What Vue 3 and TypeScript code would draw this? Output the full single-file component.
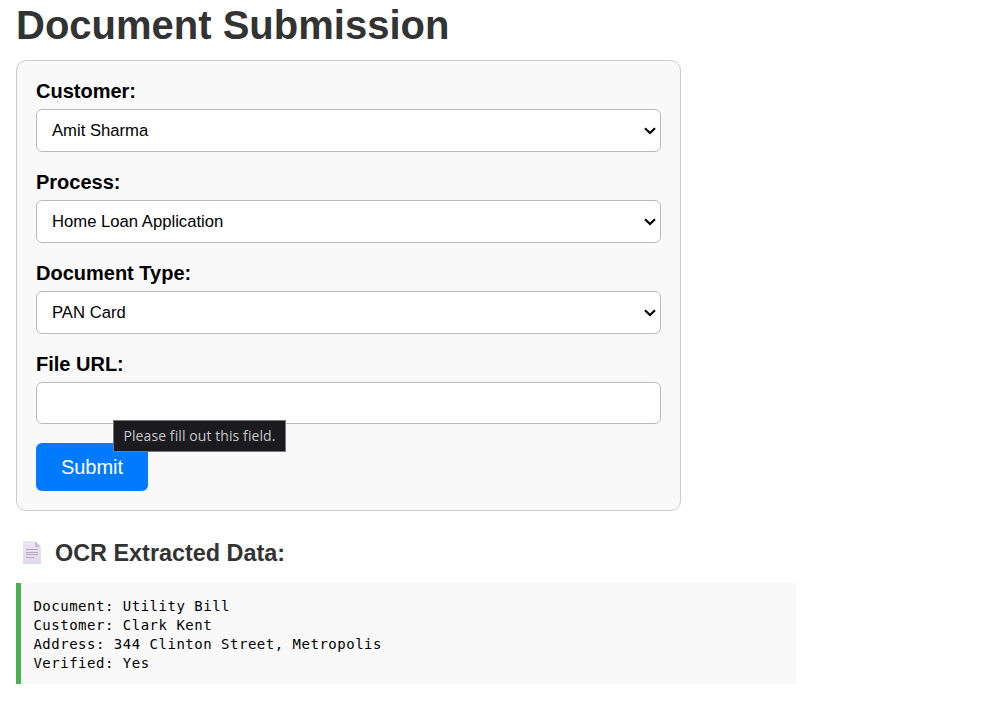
<script setup lang="ts">
import { ref } from 'vue'

interface SelectField {
  id: string
  label: string
  value: string
}

const fields = ref<SelectField[]>([
  { id: 'customer', label: 'Customer:', value: 'Amit Sharma' },
  { id: 'process', label: 'Process:', value: 'Home Loan Application' },
  { id: 'document-type', label: 'Document Type:', value: 'PAN Card' },
])
const fileUrl = ref('')

const extracted = [
  'Document: Utility Bill',
  'Customer: Clark Kent',
  'Address: 344 Clinton Street, Metropolis',
  'Verified: Yes',
].join('\n')
</script>

<template>
  <main class="page">
    <h1 class="title">Document Submission</h1>

    <form class="form" @submit.prevent>
      <div v-for="field in fields" :key="field.id" class="field">
        <label class="label" :for="field.id">{{ field.label }}</label>
        <div class="select-wrap">
          <select :id="field.id" v-model="field.value" class="control">
            <option :value="field.value">{{ field.value }}</option>
          </select>
          <svg class="chevron" width="12" height="8" viewBox="0 0 12 8" aria-hidden="true">
            <path d="M1 1.3 6 6.1l5-4.8" fill="none" stroke="#000" stroke-width="2.1" />
          </svg>
        </div>
      </div>

      <div class="field url-field">
        <label class="label" for="file-url">File URL:</label>
        <input id="file-url" v-model="fileUrl" class="control" type="text" required />
        <span class="tooltip">Please fill out this field.</span>
      </div>

      <button class="submit" type="submit">Submit</button>
    </form>

    <h3 class="subtitle">
      <svg class="page-icon" width="18" height="23" viewBox="0 0 18 23" aria-hidden="true">
        <defs>
          <linearGradient id="sheet" x1="0" y1="0" x2="0" y2="1">
            <stop offset="0" stop-color="#ece5f3" />
            <stop offset="1" stop-color="#e0d7ed" />
          </linearGradient>
        </defs>
        <path d="M0 0h12l6 6v17H0z" fill="url(#sheet)" />
        <path d="M12 0l6 6h-6z" fill="#c9c0d2" />
        <path d="M3 8.5h12M3 11.5h12M3 13.5h12M3 16.5h8" stroke="#b5adbc" stroke-width="1" />
      </svg>
      <span>OCR Extracted Data:</span>
    </h3>
    <pre class="result">{{ extracted }}</pre>
  </main>
</template>

<style>
body {
  margin: 0;
  background: #fff;
}
</style>

<style scoped>
.page {
  box-sizing: border-box;
  height: 702px;
  padding: 2px 16px 0;
  overflow: hidden;
  font-family: 'Liberation Sans', Arial, sans-serif;
  font-size: 20px;
}

.title {
  margin: 0 0 12px;
  color: #333;
  font-size: 40px;
  line-height: 46px;
}

.form {
  box-sizing: border-box;
  width: 665px;
  height: 451px;
  padding: 19px 19px 19px;
  border: 1px solid #ccc;
  border-radius: 10px;
  background: #f9f9f9;
}

.field {
  height: 91px;
}

.label {
  display: block;
  height: 23px;
  margin-bottom: 6px;
  font-weight: bold;
  line-height: 23px;
}

.select-wrap {
  position: relative;
}

.control {
  display: block;
  box-sizing: border-box;
  width: 100%;
  height: 43px;
  margin: 0;
  padding: 0 15px;
  border: 1px solid #bbb;
  border-radius: 6px;
  outline: none;
  background: #fff;
  color: #000;
  font-family: inherit;
  font-size: 16.667px;
  appearance: none;
}

.chevron {
  position: absolute;
  top: 18px;
  right: 5px;
  pointer-events: none;
}

.url-field {
  position: relative;
  height: 90px;
}

.url-field .control {
  height: 42px;
}

.tooltip {
  position: absolute;
  top: 67px;
  left: 77px;
  box-sizing: border-box;
  width: 173px;
  height: 32px;
  border: 1px solid #77777b;
  background: #1a1a1f;
  color: #c8c8cb;
  font-family: 'Open Sans', 'Noto Sans', sans-serif;
  font-size: 14px;
  line-height: 30px;
  letter-spacing: 0.09px;
  text-align: center;
  white-space: nowrap;
}

.submit {
  display: block;
  width: 112px;
  height: 48px;
  padding: 0;
  border: 0;
  border-radius: 6px;
  background: #007bff;
  color: #fff;
  font-family: inherit;
  font-size: 20px;
}

.subtitle {
  display: flex;
  align-items: center;
  gap: 14px;
  height: 28px;
  margin: 28px 0 16px;
  padding-left: 7px;
  color: #333;
  font-size: 23.4px;
  line-height: 28px;
}

.page-icon {
  margin-top: -1px;
}

.result {
  box-sizing: border-box;
  width: 780px;
  height: 101px;
  margin: 0;
  padding: 14px 12.4px;
  border-left: 5px solid #4caf50;
  background: #f9f9f9;
  color: #000;
  font-family: 'DejaVu Sans Mono', monospace;
  font-size: 14px;
  line-height: 19px;
  letter-spacing: 0.51px;
}
</style>
